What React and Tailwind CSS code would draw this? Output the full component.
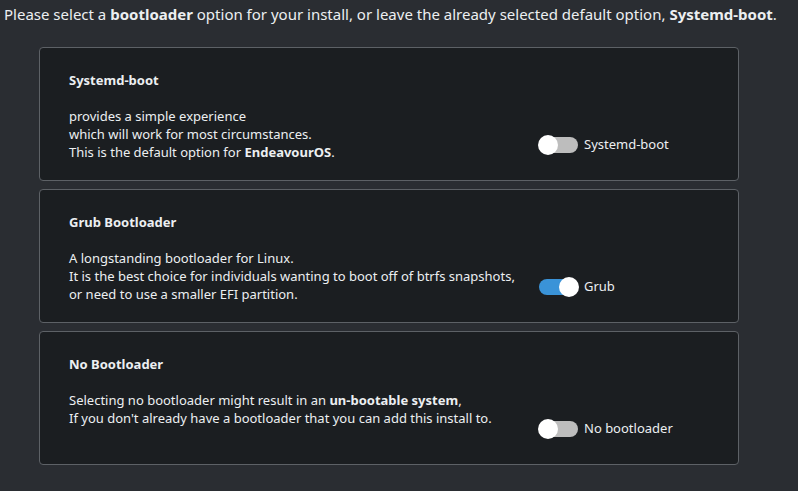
import { useState } from 'react';

const options = [
  {
    id: 'systemd',
    title: 'Systemd-boot',
    label: 'Systemd-boot',
    lines: [
      <>provides a simple experience</>,
      <>which will work for most circumstances.</>,
      <>
        This is the default option for <b className="font-bold">EndeavourOS</b>.
      </>,
    ],
  },
  {
    id: 'grub',
    title: 'Grub Bootloader',
    label: 'Grub',
    lines: [
      <>A longstanding bootloader for Linux.</>,
      <>It is the best choice for individuals wanting to boot off of btrfs snapshots,</>,
      <>or need to use a smaller EFI partition.</>,
    ],
  },
  {
    id: 'none',
    title: 'No Bootloader',
    label: 'No bootloader',
    lines: [
      <>
        Selecting no bootloader might result in an{' '}
        <b className="font-bold">un-bootable system</b>,
      </>,
      <>If you don't already have a bootloader that you can add this install to.</>,
    ],
  },
];

function Toggle({ on, onClick }) {
  return (
    <button
      type="button"
      onClick={onClick}
      className={`relative w-[39px] h-[16px] rounded-full ${on ? 'bg-[#3a93d8]' : 'bg-[#bdbdbd]'}`}
    >
      <span
        className={`absolute top-1/2 -translate-y-1/2 w-[20px] h-[20px] rounded-full bg-white ${on ? 'left-[20px]' : 'left-[-1px]'}`}
      />
    </button>
  );
}

export default function App() {
  const [selected, setSelected] = useState('grub');

  return (
    <div
      className="w-[798px] h-[491px] bg-[#2a2d32] text-[#eceff1] overflow-hidden"
      style={{ fontFamily: '"Noto Sans", "Open Sans", sans-serif' }}
    >
      {/* Header */}
      <p className="pl-[4px] pt-[3px] text-[15px] leading-[22px]">
        Please select a <b className="font-bold">bootloader</b> option for your install, or leave the already
        selected default option, <b className="font-bold">Systemd-boot</b>.
      </p>

      {/* Options */}
      <div className="flex flex-col gap-[8px] mt-[22px] ml-[39px] w-[700px]">
        {options.map((opt) => (
          <div
            key={opt.id}
            className="h-[134px] rounded-[4px] border border-[#5d6166] bg-[#1b1e21] pl-[29px] pt-[23px]"
          >
            <h3 className="text-[13px] font-bold leading-[18px]">{opt.title}</h3>
            <div className="flex mt-[18px]">
              <div className="w-[470px] text-[13px] leading-[18px]">
                {opt.lines.map((line, i) => (
                  <div key={i}>{line}</div>
                ))}
              </div>
              <div className="flex items-center gap-[6px] mt-[28px] h-[20px]">
                <Toggle on={selected === opt.id} onClick={() => setSelected(opt.id)} />
                <span className="text-[13px]">{opt.label}</span>
              </div>
            </div>
          </div>
        ))}
      </div>
    </div>
  );
}
